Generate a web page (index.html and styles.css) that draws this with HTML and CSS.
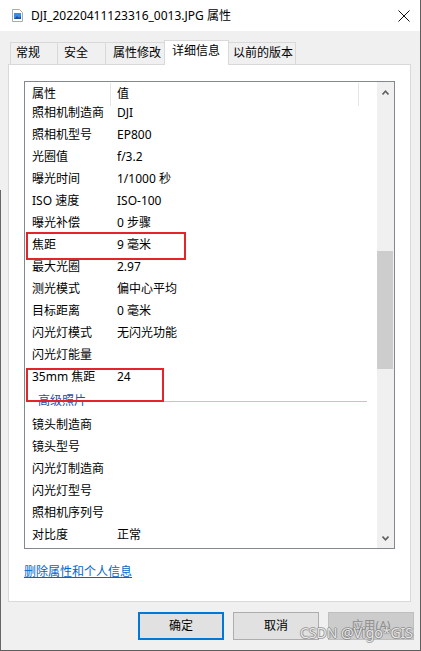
FILE: index.html
```html
<!DOCTYPE html>
<html lang="zh-CN">
<head>
<meta charset="utf-8">
<title>DJI_20220411123316_0013.JPG 属性</title>
<link rel="stylesheet" href="styles.css">
</head>
<body>
<div class="window">
  <div class="titlebar">
    <svg class="app-icon" width="11" height="13" viewBox="0 0 11 13">
      <path d="M0.5 0.5h7l3 3v9h-10z" fill="#fff" stroke="#a3abb6"/>
      <rect x="2" y="4" width="7" height="6" fill="#3a8ce0"/>
      <path d="M2 10l3-3 2 2 2-2v3z" fill="#1b4f9c"/>
    </svg>
    <span class="title">DJI_20220411123316_0013.JPG 属性</span>
    <svg class="close" width="12" height="12" viewBox="0 0 12 12">
      <path d="M0.5 0.5L11.5 11.5M11.5 0.5L0.5 11.5" stroke="#111" stroke-width="1"/>
    </svg>
  </div>

  <div class="tabs">
    <div class="tab tab-1">常规</div>
    <div class="tab tab-2">安全</div>
    <div class="tab tab-3">属性修改</div>
    <div class="tab tab-sel">详细信息</div>
    <div class="tab tab-5">以前的版本</div>
  </div>

  <div class="panel">
    <div class="list">
      <div class="list-main">
        <div class="lv-head">
          <div class="hcell hname">属性</div>
          <div class="hcell hval">值</div>
        </div>
        <div class="row"><span class="k">照相机制造商</span><span class="v">DJI</span></div>
        <div class="row"><span class="k">照相机型号</span><span class="v">EP800</span></div>
        <div class="row"><span class="k">光圈值</span><span class="v">f/3.2</span></div>
        <div class="row"><span class="k">曝光时间</span><span class="v">1/1000 秒</span></div>
        <div class="row"><span class="k">ISO 速度</span><span class="v">ISO-100</span></div>
        <div class="row"><span class="k">曝光补偿</span><span class="v">0 步骤</span></div>
        <div class="row"><span class="k">焦距</span><span class="v">9 毫米</span></div>
        <div class="row"><span class="k">最大光圈</span><span class="v">2.97</span></div>
        <div class="row"><span class="k">测光模式</span><span class="v">偏中心平均</span></div>
        <div class="row"><span class="k">目标距离</span><span class="v">0 毫米</span></div>
        <div class="row"><span class="k">闪光灯模式</span><span class="v">无闪光功能</span></div>
        <div class="row"><span class="k">闪光灯能量</span><span class="v"></span></div>
        <div class="row"><span class="k">35mm 焦距</span><span class="v">24</span></div>
        <div class="group"><span class="group-title">高级照片</span><span class="group-line"></span></div>
        <div class="row"><span class="k">镜头制造商</span><span class="v"></span></div>
        <div class="row"><span class="k">镜头型号</span><span class="v"></span></div>
        <div class="row"><span class="k">闪光灯制造商</span><span class="v"></span></div>
        <div class="row"><span class="k">闪光灯型号</span><span class="v"></span></div>
        <div class="row"><span class="k">照相机序列号</span><span class="v"></span></div>
        <div class="row"><span class="k">对比度</span><span class="v">正常</span></div>
      </div>
      <div class="scrollbar">
        <div class="sb-btn">
          <svg width="7" height="5" viewBox="0 0 7 5"><path d="M0.5 4.5L3.5 1.2L6.5 4.5" fill="none" stroke="#606060" stroke-width="1.6"/></svg>
        </div>
        <div class="sb-thumb"></div>
        <div class="sb-space"></div>
        <div class="sb-btn">
          <svg width="7" height="5" viewBox="0 0 7 5"><path d="M0.5 0.5L3.5 3.8L6.5 0.5" fill="none" stroke="#606060" stroke-width="1.6"/></svg>
        </div>
      </div>
    </div>
    <a class="link" href="#">删除属性和个人信息</a>
  </div>

  <div class="buttons">
    <div class="btn btn-default">确定</div>
    <div class="btn">取消</div>
    <div class="btn btn-disabled">应用(A)</div>
  </div>

  <div class="mark mark-1"></div>
  <div class="mark mark-2"></div>
  <div class="watermark">CSDN @Vigo*GIS</div>
</div>
</body>
</html>
```

FILE: styles.css
```css
html, body {
  margin: 0;
  padding: 0;
  background: #ffffff;
}

.window {
  position: relative;
  width: 421px;
  height: 651px;
  box-sizing: border-box;
  border-right: 1px solid #5e5e5e;
  border-bottom: 1px solid #5e5e5e;
  background: #f0f0f0;
  display: flex;
  flex-direction: column;
  font-family: "Noto Sans", "Noto Sans CJK SC", sans-serif;
  font-size: 12px;
  color: #000;
  overflow: hidden;
}

.window::before {
  content: "";
  position: absolute;
  left: 0;
  top: 190px;
  bottom: 0;
  width: 1px;
  background: #666;
}

/* title bar */
.titlebar {
  height: 31px;
  flex: none;
  background: #fff;
  display: flex;
  align-items: center;
  padding-left: 12px;
}

.app-icon {
  margin-right: 8px;
  flex: none;
}

.title {
  flex: 1;
  line-height: 16px;
  white-space: nowrap;
}

.close {
  flex: none;
  margin-right: 10px;
}

/* tabs */
.tabs {
  display: flex;
  align-items: flex-end;
  height: 24px;
  margin-top: 9px;
  padding-left: 10px;
  flex: none;
}

.tab {
  box-sizing: border-box;
  height: 22px;
  border: 1px solid #d9d9d9;
  border-bottom: 0;
  margin-left: -1px;
  padding-left: 6px;
  line-height: 20px;
  background: #f0f0f0;
  white-space: nowrap;
}

.tab-1 { width: 48px; margin-left: 0; padding-left: 5px; }
.tab-2 { width: 49px; }
.tab-3 { width: 60px; padding-left: 7px; }
.tab-5 { width: 68px; padding-left: 4px; }

.tab-sel {
  position: relative;
  z-index: 1;
  width: 65px;
  height: 25px;
  margin-bottom: -1px;
  background: #fff;
  padding-left: 7px;
  line-height: 19px;
}

/* panel */
.panel {
  box-sizing: border-box;
  width: 403px;
  height: 538px;
  margin-left: 8px;
  flex: none;
  background: #fff;
  border: 1px solid #d9d9d9;
  padding: 16px 0 0 15px;
  display: flex;
  flex-direction: column;
  align-items: flex-start;
}

.list {
  box-sizing: border-box;
  width: 371px;
  height: 468px;
  border: 1px solid #828790;
  display: flex;
  flex: none;
}

.list-main {
  flex: 1;
  overflow: hidden;
}

.lv-head {
  display: flex;
  height: 20px;
  align-items: flex-start;
}

.hcell {
  box-sizing: border-box;
  height: 23px;
  margin-top: 1px;
  border-right: 1px solid #e5e5e5;
  line-height: 22px;
  white-space: nowrap;
}

.hname {
  width: 86px;
  padding-left: 7px;
}

.hval {
  width: 248px;
  padding-left: 6px;
}

.row {
  display: flex;
  height: 22px;
  line-height: 22px;
  white-space: nowrap;
}

.k {
  width: 85px;
  flex: none;
  padding-left: 7px;
  box-sizing: border-box;
}

.v {
  padding-left: 7px;
}

.group {
  display: flex;
  align-items: center;
  height: 26px;
  padding-left: 13px;
  color: #2b4ea3;
}

.group-title {
  line-height: 16px;
}

.group-line {
  flex: 1;
  height: 1px;
  background: #b9c5e8;
  margin: 1px 10px 0 4px;
}

/* scrollbar */
.scrollbar {
  width: 17px;
  flex: none;
  background: #f0f0f0;
  display: flex;
  flex-direction: column;
}

.sb-btn {
  height: 20px;
  flex: none;
  display: flex;
  align-items: center;
  justify-content: center;
}

.sb-thumb {
  flex: none;
  width: 16px;
  height: 118px;
  margin-top: 149px;
  background: #cdcdcd;
}

.sb-space {
  flex: 1;
}

/* link */
.link {
  margin-top: 15px;
  line-height: 16px;
  color: #0066cc;
  text-decoration: underline;
}

/* buttons */
.buttons {
  display: flex;
  gap: 9px;
  padding-left: 138px;
  margin-top: 10px;
  flex: none;
}

.btn {
  box-sizing: border-box;
  width: 86px;
  height: 28px;
  background: #e1e1e1;
  border: 1px solid #adadad;
  display: flex;
  align-items: center;
  justify-content: center;
  line-height: 16px;
}

.btn-default {
  border: 2px solid #0078d7;
}

.btn-disabled {
  background: #cccccc;
  border-color: #bfbfbf;
  color: #8f8f8f;
}

/* annotations */
.mark {
  position: absolute;
  box-sizing: border-box;
  border: 2px solid #e3242b;
  left: 26px;
}

.mark-1 {
  top: 232px;
  width: 160px;
  height: 28px;
}

.mark-2 {
  top: 368px;
  width: 138px;
  height: 34px;
}

.watermark {
  position: absolute;
  left: 300px;
  top: 624px;
  font-family: "Noto Sans", "Noto Sans CJK SC", sans-serif;
  font-size: 14px;
  line-height: 18px;
  color: rgba(250, 250, 250, 0.85);
  text-shadow: 1px 0 0 rgba(110, 110, 110, 0.55), -1px 0 0 rgba(110, 110, 110, 0.55), 0 1px 0 rgba(110, 110, 110, 0.55), 0 -1px 0 rgba(110, 110, 110, 0.55);
  white-space: nowrap;
}
```
